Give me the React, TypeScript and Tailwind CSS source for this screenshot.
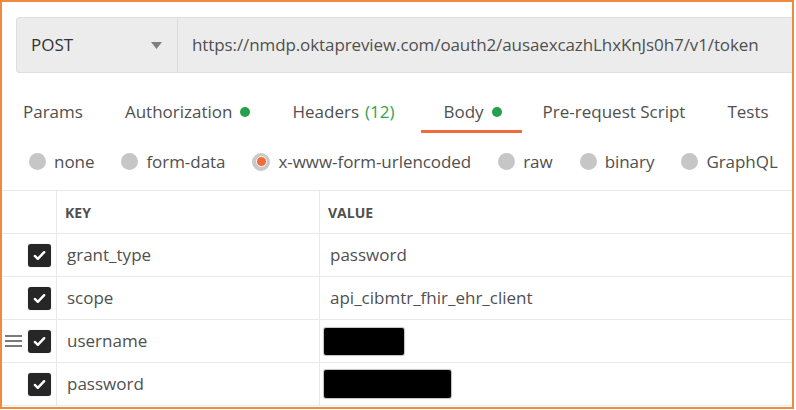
const tabs = [
  { label: 'Params' },
  { label: 'Authorization', dot: true },
  { label: 'Headers', count: '(12)' },
  { label: 'Body', dot: true, active: true },
  { label: 'Pre-request Script' },
  { label: 'Tests' },
];

const bodyTypes = [
  { label: 'none' },
  { label: 'form-data' },
  { label: 'x-www-form-urlencoded', selected: true },
  { label: 'raw' },
  { label: 'binary' },
  { label: 'GraphQL' },
];

const rows = [
  { key: 'grant_type', value: 'password' },
  { key: 'scope', value: 'api_cibmtr_fhir_ehr_client' },
  { key: 'username', redact: 'w-[80px] h-[27px]', handle: true },
  { key: 'password', redact: 'w-[127px] h-[28px]' },
];

function Check() {
  return (
    <div className="w-[23px] h-[23px] rounded-[3px] bg-[#262626] flex items-center justify-center shadow-[0_0_1px_rgba(0,0,0,0.4)]">
      <svg className="w-[15px] h-[15px]" viewBox="0 0 16 16" fill="none" stroke="white" strokeWidth={2.6} strokeLinecap="round" strokeLinejoin="round">
        <path d="M3 8.5l3.2 3L13 4.5" />
      </svg>
    </div>
  );
}

export default function App() {
  return (
    <div className="w-[796px] h-[410px] bg-white font-['Open_Sans',sans-serif]">
      <div className="w-[794px] h-[409px] border-2 border-[#f08a3e] overflow-hidden">
        {/* URL bar */}
        <div className="pl-[14px] pt-[15px]">
          <div className="w-[820px] h-[56px] flex bg-[#ececec] border border-[#dedede] rounded-[3px]">
            <div className="w-[161px] flex items-center justify-between pl-[14px] pr-[15px] border-r border-[#dcdcdc]">
              <span className="text-[17px] font-medium text-[#333]">POST</span>
              <svg className="w-[11px] h-[7px]" viewBox="0 0 11 7">
                <path d="M0 0h11L5.5 7z" fill="#808080" />
              </svg>
            </div>
            <div className="flex items-center pl-[14px] text-[17px] text-[#505050] whitespace-nowrap tracking-[-0.1px]">
              https://nmdp.oktapreview.com/oauth2/ausaexcazhLhxKnJs0h7/v1/token
            </div>
          </div>
        </div>

        {/* Tabs */}
        <div className="h-[60px] flex">
          {tabs.map((t) => (
            <div
              key={t.label}
              className={`h-[60px] shrink-0 whitespace-nowrap flex items-end gap-[8px] pb-[7px] text-[17px] text-[#505050] border-b-[3px] ${
                t.active ? 'border-[#f26b3a] ml-[6px] pl-[22px] pr-[20px]' : 'border-transparent px-[21px]'
              }`}
            >
              <span className="leading-[23px]">{t.label}</span>
              {t.count && <span className="leading-[23px] text-[#2fa44f] -ml-[2px]">{t.count}</span>}
              {t.dot && <span className="w-[10px] h-[10px] mb-[6px] rounded-full bg-[#26a04a]" />}
            </div>
          ))}
        </div>

        {/* Body types */}
        <div className="h-[57px] flex items-center pl-[27px]">
          {bodyTypes.map((b) => (
            <div key={b.label} className="flex shrink-0 whitespace-nowrap items-center gap-[8px] mr-[27px]">
              {b.selected ? (
                <span className="w-[18px] h-[18px] rounded-full bg-[#c9c9c9] flex items-center justify-center">
                  <span className="w-[11px] h-[11px] rounded-full bg-[#f26b3a] border border-white" />
                </span>
              ) : (
                <span className="w-[17px] h-[17px] rounded-full bg-[#c6c6c6]" />
              )}
              <span className="text-[17px] text-[#505050] tracking-[-0.05px]">{b.label}</span>
            </div>
          ))}
        </div>

        {/* Table */}
        <div className="border-t border-[#e9e9e9]">
          <div className="flex h-[43px] border-b border-[#e9e9e9]">
            <div className="w-[55px] border-r border-[#e9e9e9]" />
            <div className="w-[263px] border-r border-[#e9e9e9] flex items-center pl-[8px] text-[14px] font-bold text-[#505050]">
              KEY
            </div>
            <div className="flex-1 flex items-center pl-[8px] text-[14px] font-bold text-[#505050]">
              VALUE
            </div>
          </div>
          {rows.map((r) => (
            <div key={r.key} className="flex h-[43px] border-b border-[#e9e9e9]">
              <div className="w-[55px] border-r border-[#e9e9e9] flex items-center justify-between pl-[3px] pr-[5px]">
                {r.handle ? (
                  <div className="flex flex-col gap-[3px]">
                    <span className="w-[17px] h-[2px] bg-[#7a7a7a]" />
                    <span className="w-[17px] h-[2px] bg-[#7a7a7a]" />
                    <span className="w-[17px] h-[2px] bg-[#7a7a7a]" />
                  </div>
                ) : (
                  <span />
                )}
                <Check />
              </div>
              <div className="w-[263px] border-r border-[#e9e9e9] flex items-center pl-[10px] text-[17px] text-[#505050]">
                {r.key}
              </div>
              <div className="flex-1 flex items-center pl-[4px] text-[17px] text-[#505050]">
                {r.redact ? (
                  <div className={`${r.redact} bg-black rounded-[2px] shadow-[0_0_1px_1px_rgba(0,0,0,0.25)]`} />
                ) : (
                  <span className="pl-[6px]">{r.value}</span>
                )}
              </div>
            </div>
          ))}
        </div>
      </div>
    </div>
  );
}
